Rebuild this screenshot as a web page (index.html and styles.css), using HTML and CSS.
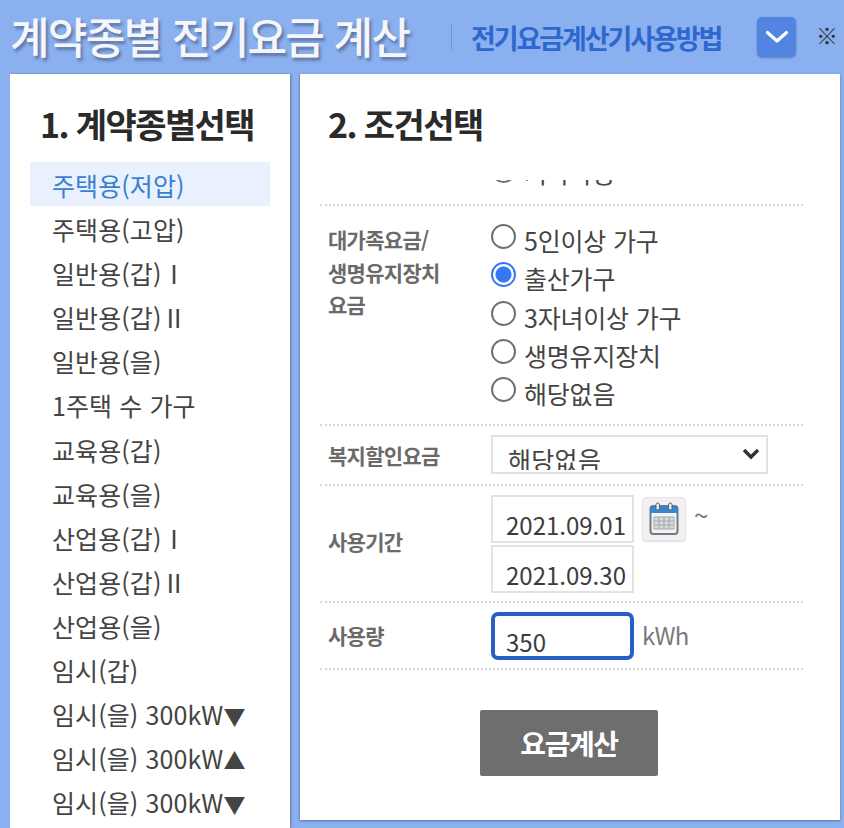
FILE: index.html
```html
<!DOCTYPE html>
<html lang="ko">
<head>
<meta charset="utf-8">
<title>계약종별 전기요금 계산</title>
<link rel="stylesheet" href="styles.css">
</head>
<body>
<div class="page">
  <header class="top">
    <h1 class="title">계약종별 전기요금 계산</h1>
    <span class="divider"></span>
    <a class="howto">전기요금계산기사용방법</a>
    <button class="toggle" type="button" aria-label="열기">
      <svg width="24" height="14" viewBox="0 0 24 14"><path d="M2.5 2.5 12 11 21.5 2.5" fill="none" stroke="#fff" stroke-width="3.2" stroke-linecap="round" stroke-linejoin="round"/></svg>
    </button>
    <span class="mark">※</span>
  </header>
  <main class="panels">
    <section class="left">
      <h2 class="heading">1. 계약종별선택</h2>
      <ul class="types">
        <li class="active">주택용(저압)</li>
        <li>주택용(고압)</li>
        <li>일반용(갑)Ⅰ</li>
        <li>일반용(갑)Ⅱ</li>
        <li>일반용(을)</li>
        <li>1주택 수 가구</li>
        <li>교육용(갑)</li>
        <li>교육용(을)</li>
        <li>산업용(갑)Ⅰ</li>
        <li>산업용(갑)Ⅱ</li>
        <li>산업용(을)</li>
        <li>임시(갑)</li>
        <li>임시(을) 300kW<span class="tri">▼</span></li>
        <li>임시(을) 300kW<span class="tri">▲</span></li>
        <li>임시(을) 300kW<span class="tri">▼</span></li>
        <li>임시(병) 주택용</li>
      </ul>
    </section>
    <section class="right">
      <h2 class="heading heading-right">2. 조건선택</h2>
      <div class="scroll">
        <div class="row row-cut">
          <div class="value"><label class="opt"><span class="radio"></span><span>기타사용</span></label></div>
        </div>
        <div class="row row-family">
          <div class="label">대가족요금/<br>생명유지장치<br>요금</div>
          <div class="value opts">
            <label class="opt"><span class="radio"></span><span>5인이상 가구</span></label>
            <label class="opt"><span class="radio on"></span><span>출산가구</span></label>
            <label class="opt"><span class="radio"></span><span>3자녀이상 가구</span></label>
            <label class="opt"><span class="radio"></span><span>생명유지장치</span></label>
            <label class="opt"><span class="radio"></span><span>해당없음</span></label>
          </div>
        </div>
        <div class="row row-welfare">
          <div class="label">복지할인요금</div>
          <div class="value">
            <div class="select"><span class="select-text">해당없음</span>
              <svg class="caret" width="18" height="12" viewBox="0 0 18 12"><path d="M2 2 9 9 16 2" fill="none" stroke="#333" stroke-width="3.4"/></svg>
            </div>
          </div>
        </div>
        <div class="row row-period">
          <div class="label">사용기간</div>
          <div class="value period">
            <div class="period-line">
              <div class="field">2021.09.01</div>
              <button class="cal" type="button" aria-label="달력">
                <svg width="32" height="36" viewBox="0 0 32 36">
                  <rect x="2.5" y="5" width="27" height="28" rx="3" fill="#f1f3f6" stroke="#77797e" stroke-width="2"/>
                  <path d="M2 12V8a3 3 0 0 1 3-3h22a3 3 0 0 1 3 3v4z" fill="#3a86c8"/>
                  <rect x="8" y="2" width="3.4" height="7" rx="1.7" fill="#eef0f2" stroke="#5d6168"/>
                  <rect x="20.6" y="2" width="3.4" height="7" rx="1.7" fill="#eef0f2" stroke="#5d6168"/>
                  <path d="M6 16h20v12H6zM6 20h20M6 24h20M11 16v12M16 16v12M21 16v12" fill="#d8dade" stroke="#a6a9ae"/>
                </svg>
              </button>
              <span class="tilde">~</span>
            </div>
            <div class="field">2021.09.30</div>
          </div>
        </div>
        <div class="row row-usage">
          <div class="label">사용량</div>
          <div class="value usage">
            <div class="field field-focus">350</div>
            <span class="unit">kWh</span>
          </div>
        </div>
      </div>
      <div class="actions"><button class="calc" type="button">요금계산</button></div>
    </section>
  </main>
</div>
</body>
</html>
```
FILE: styles.css
```css
* { box-sizing: border-box; }
html, body { margin: 0; height: 100%; }
body {
  background: #8ab0ef;
  font-family: "Noto Sans CJK KR", "Noto Sans", sans-serif;
  color: #444;
  overflow: hidden;
}
.page { width: 844px; height: 828px; overflow: hidden; }
.top {
  height: 74px;
  display: flex;
  align-items: center;
  padding-left: 10px;
}
.title {
  margin: -4px 0 0;
  width: 400px;
  font-size: 43px;
  font-weight: 500;
  letter-spacing: -1.7px;
  line-height: 74px;
  white-space: nowrap;
  color: #f4f6fb;
  text-shadow: 2px 3px 3px rgba(60, 70, 100, .55);
}
.divider {
  width: 1px;
  height: 26px;
  margin-left: 41px;
  background: #6f97dc;
}
.howto {
  margin-left: 19px;
  width: 251px;
  font-size: 27px;
  font-weight: 700;
  letter-spacing: -2.1px;
  white-space: nowrap;
  color: #2c68cf;
}
.toggle {
  margin-left: 35px;
  width: 39px;
  height: 40px;
  padding: 0;
  display: flex;
  align-items: center;
  justify-content: center;
  border: 0;
  border-radius: 5px;
  background: #5285e2;
  box-shadow: 0 1px 2px rgba(50, 80, 150, .5);
}
.mark {
  margin-left: 20px;
  font-size: 22px;
  font-weight: 700;
  color: #333;
  margin-top: -7px;
}
.panels {
  display: flex;
  gap: 10px;
  padding-left: 10px;
  height: 754px;
  align-items: flex-start;
}
.left {
  width: 280px;
  height: 754px;
  padding: 27px 20px 0;
  background: #fff;
  box-shadow: 1px 0 2px rgba(60, 80, 130, .6);
}
.heading {
  margin: 0;
  height: 61px;
  font-size: 34px;
  font-weight: 700;
  line-height: 46px;
  letter-spacing: -1.6px;
  color: #2a2a2a;
  padding-left: 10px;
  white-space: nowrap;
}
.types { list-style: none; margin: 0; padding: 0; }
.types li {
  height: 44.1px;
  padding-left: 22px;
  font-size: 25px;
  line-height: 47px;
  letter-spacing: .1px;
  color: #444;
  white-space: nowrap;
  overflow: hidden;
}
.types li.active { background: #e8f1fd; color: #3a7fd0; }
.tri { font-size: 22px; }
.right {
  width: 540px;
  height: 746px;
  padding: 27px 37px 0 20px;
  background: #fff;
  box-shadow: 0 1px 2px rgba(60, 80, 130, .6), -1px 0 1px rgba(60, 80, 130, .2);
}
.heading-right { padding-left: 8px; height: 79px; }
.scroll { height: 492px; overflow: hidden; }
.row {
  display: flex;
  border-bottom: 2px dotted #d8d8d8;
  padding-left: 8px;
}
.label {
  width: 163px;
  flex: none;
  font-size: 21px;
  font-weight: 700;
  line-height: 32.5px;
  letter-spacing: -.7px;
  color: #6a6a6a;
  white-space: nowrap;
}
.value { font-size: 25px; color: #444; }
.row-cut { height: 26px; padding-left: 171px; align-items: flex-start; overflow: hidden; }
.row-cut .value { margin-top: -28px; }
.row-cut .radio { margin-top: -2px; }
.row-family { height: 220px; padding-top: 14px; align-items: flex-start; }
.row-family .label { padding-top: 3px; }
.opts { display: flex; flex-direction: column; }
.opt { display: flex; align-items: center; gap: 8px; height: 38.3px; line-height: 38px; white-space: nowrap; }
.opt span:last-child { position: relative; top: 1px; letter-spacing: -.2px; }
.radio {
  width: 25px;
  height: 25px;
  margin-top: -5px;
  flex: none;
  border: 2px solid #707070;
  border-radius: 50%;
  background: #fff;
}
.radio.on {
  border: 2px solid #3478f6;
  background: radial-gradient(circle, #3478f6 0 7.5px, #fff 8.5px);
}
.row-welfare { height: 60px; align-items: center; }
.select {
  width: 277px;
  height: 39px;
  margin-top: -2px;
  padding-left: 15px;
  display: flex;
  align-items: flex-start;
  justify-content: space-between;
  border: 2px solid #e2e2e2;
  overflow: hidden;
}
.select-text { line-height: 45px; height: 33px; overflow: hidden; letter-spacing: .3px; }
.caret { margin: 11px 6px 0 0; }
.row-period { height: 117px; align-items: center; }
.row-period .label { margin-top: -5px; }
.period { display: flex; flex-direction: column; gap: 2px; }
.period-line { display: flex; align-items: flex-start; }
.field {
  width: 143px;
  height: 48px;
  padding-left: 13px;
  border: 2px solid #e2e2e2;
  font-size: 24px;
  line-height: 55px;
  color: #3c3c3c;
  overflow: hidden;
  background: #fff;
}
.cal {
  width: 44px;
  height: 44px;
  margin: 2px 0 0 8px;
  padding: 0;
  display: flex;
  align-items: center;
  justify-content: center;
  border: 1px solid #e3e3e3;
  border-radius: 4px;
  background: #f1f1f1;
  box-shadow: 0 1px 1px rgba(0, 0, 0, .12);
}
.tilde { margin-left: 8px; font-size: 26px; line-height: 40px; color: #777; }
.row-usage { height: 67px; align-items: center; }
.row-usage .label { margin-top: -1px; }
.usage { display: flex; align-items: center; gap: 8px; margin-top: 1px; }
.field-focus { border: 4px solid #2a5ec4; border-radius: 7px; padding-left: 11px; line-height: 51px; }
.unit { font-size: 24px; color: #7a7a7a; letter-spacing: -.8px; margin-top: -4px; }
.actions { display: flex; padding: 38px 0 0 160px; }
.calc {
  width: 178px;
  height: 66px;
  border: 0;
  border-radius: 2px;
  background: #6e6e6e;
  color: #fff;
  font: 700 28px "Noto Sans CJK KR", sans-serif;
  letter-spacing: -1.4px;
  padding: 0;
}
```
